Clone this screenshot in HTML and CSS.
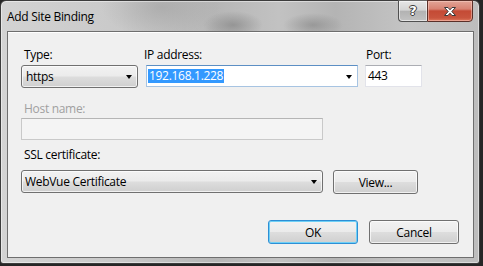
FILE: index.html
```html
<!DOCTYPE html>
<html>
<head>
<meta charset="utf-8">
<link rel="stylesheet" href="styles.css">
</head>
<body>
<div class="window">
  <div class="titlebar">
    <div class="title">Add Site Binding</div>
    <div class="caption">
      <div class="cbtn help"><span>?</span></div>
      <div class="cbtn close">
        <svg width="14" height="11" viewBox="0 0 14 11"><path d="M1.5 1.5 H5 L7 3.8 L9 1.5 H12.5 L8.8 5.5 L12.5 9.5 H9 L7 7.2 L5 9.5 H1.5 L5.2 5.5 Z" fill="#fff" stroke="#3a3a3a" stroke-width="1" stroke-linejoin="round"/></svg>
      </div>
    </div>
  </div>
  <div class="client">
    <div class="row row-top">
      <div class="field f-type">
        <div class="lbl l-type">Type:</div>
        <div class="combo w-type"><span class="ctext">https</span><span class="arrow"></span></div>
      </div>
      <div class="field f-ip">
        <div class="lbl l-ip">IP address:</div>
        <div class="editcombo w-ip"><span class="sel">192.168.1.228</span><span class="arrow"></span></div>
      </div>
      <div class="field f-port">
        <div class="lbl l-port">Port:</div>
        <div class="textbox w-port">443</div>
      </div>
    </div>
    <div class="field f-host">
      <div class="lbl l-host disabled">Host name:</div>
      <div class="textbox disabled-box w-host"></div>
    </div>
    <div class="field f-ssl">
      <div class="lbl l-ssl">SSL certificate:</div>
      <div class="row row-ssl">
        <div class="combo w-ssl"><span class="ctext">WebVue Certificate</span><span class="arrow"></span></div>
        <div class="button w-view">View...</div>
      </div>
    </div>
    <div class="row row-actions">
      <div class="button default w-act">OK</div>
      <div class="button w-act">Cancel</div>
    </div>
  </div>
</div>
</body>
</html>
```
FILE: styles.css
```css
html, body {
  margin: 0;
  padding: 0;
}
body {
  width: 483px;
  height: 266px;
  overflow: hidden;
  background: #262626;
  font-family: "Open Sans", "Noto Sans", sans-serif;
  font-size: 12px;
  color: #000;
}
.window {
  width: 480px;
  height: 264px;
  box-sizing: border-box;
  border: 1px solid #3c3c3c;
  border-radius: 6px 6px 3px 3px;
  display: flex;
  flex-direction: column;
  background:
    radial-gradient(ellipse 30px 14px at 232px 24px, rgba(120,120,120,0.55), rgba(120,120,120,0) 100%),
    radial-gradient(ellipse 30px 12px at 312px 24px, rgba(120,120,120,0.5), rgba(120,120,120,0) 100%),
    radial-gradient(ellipse 60px 30px at 160px 6px, rgba(150,150,150,0.45), rgba(150,150,150,0) 100%),
    linear-gradient(to right, #d3d3d3 0%, #c9c9c9 25%, #b6b6b6 45%, #c2c2c2 58%, #b4b4b4 70%, #c4c4c4 85%, #bdbdbd 100%);
  box-shadow: inset 0 0 0 1px rgba(255,255,255,0.45);
}
.titlebar {
  height: 30px;
  display: flex;
  justify-content: space-between;
  align-items: flex-start;
  padding-left: 6px;
  padding-right: 6px;
  flex: none;
}
.title {
  margin-top: 8px;
  line-height: 16px;
  font-size: 12px;
  color: #000;
  letter-spacing: -0.3px;
}
.caption {
  display: flex;
  margin-top: -1px;
}
.cbtn {
  height: 22px;
  box-sizing: border-box;
  border: 1px solid #505050;
  border-top-color: #6a6a6a;
  display: flex;
  align-items: center;
  justify-content: center;
}
.help {
  width: 29px;
  border-right: none;
  border-radius: 0 0 0 4px;
  background: linear-gradient(#e6e6e6 0%, #d4d4d4 45%, #b3b3b3 52%, #c2c2c2 100%);
  box-shadow: inset 0 0 0 1px rgba(255,255,255,0.55);
}
.help span {
  font-family: "DejaVu Sans", sans-serif;
  font-weight: bold;
  font-size: 13px;
  line-height: 14px;
  color: #fff;
  text-shadow: -1px 0 #3a3a3a, 1px 0 #3a3a3a, 0 -1px #3a3a3a, 0 1px #3a3a3a;
  margin-top: -1px;
}
.close {
  width: 46px;
  border-radius: 0 0 4px 0;
  border-color: #5a2f28;
  background: linear-gradient(#e2a496 0%, #d88272 40%, #c44a35 50%, #c9553e 85%, #e07a5f 100%);
  box-shadow: inset 0 0 0 1px rgba(255,220,210,0.45);
}
.close svg {
  display: block;
}
.client {
  flex: 1;
  margin: 0 5px 5px 6px;
  border: 1px solid #6e6e6e;
  background: #f0f0f0;
  box-shadow: inset 0 1px 0 #ffffff;
  padding: 15px 0 0 13px;
  display: flex;
  flex-direction: column;
  align-items: flex-start;
}
.row {
  display: flex;
  align-items: flex-start;
}
.field {
  display: flex;
  flex-direction: column;
  align-items: flex-start;
}
.lbl {
  line-height: 15px;
  height: 15px;
  white-space: nowrap;
  letter-spacing: -0.3px;
}
.disabled {
  color: #a0a0a0;
}
.l-type { margin-left: 3px; margin-bottom: 3px; }
.l-ip { margin-left: -2px; margin-bottom: 3px; }
.l-port { margin-left: 1px; margin-bottom: 3px; }
.f-type { margin-right: 8px; }
.f-ip { margin-right: 7px; }
.f-host { margin-top: 13px; }
.l-host { margin-left: 3px; margin-bottom: 2px; }
.f-ssl { margin-top: 7px; }
.l-ssl { margin-left: 3px; margin-bottom: 8px; }

.combo, .button {
  box-sizing: border-box;
  border: 1px solid #707070;
  border-radius: 3px;
  background: linear-gradient(#f2f2f2 0%, #ebebeb 48%, #dddddd 52%, #cfcfcf 100%);
  box-shadow: inset 0 0 0 1px rgba(255,255,255,0.7);
  letter-spacing: -0.3px;
}
.combo {
  display: flex;
  align-items: center;
  justify-content: space-between;
  padding: 0 5px 0 4px;
}
.ctext {
  white-space: nowrap;
  line-height: 15px;
}
.arrow {
  width: 0;
  height: 0;
  border-left: 3.5px solid transparent;
  border-right: 3.5px solid transparent;
  border-top: 4px solid #000;
  margin-top: 1px;
}
.w-type { width: 117px; height: 23px; }
.w-ssl { width: 302px; height: 23px; padding-left: 3px; }
.editcombo {
  box-sizing: border-box;
  width: 212px;
  height: 22px;
  border: 1px solid #a7c4e2;
  border-top-color: #5c8fc4;
  background: #fff;
  display: flex;
  align-items: center;
  justify-content: space-between;
  padding: 0 5px 0 1px;
  letter-spacing: -0.3px;
}
.sel {
  background: #3399ff;
  color: #fff;
  line-height: 14px;
  padding: 0 1px;
  white-space: nowrap;
}
.textbox {
  box-sizing: border-box;
  height: 22px;
  background: #fff;
  border: 1px solid #e2e3ea;
  border-top-color: #abadb3;
  padding: 0 2px;
  line-height: 20px;
  letter-spacing: -0.3px;
}
.w-port { width: 57px; }
.w-host { width: 302px; }
.disabled-box {
  background: #f4f4f4;
  border-color: #c9c9c9;
  border-top-color: #b5b5b5;
}
.row-ssl {
  align-items: flex-start;
}
.button {
  display: flex;
  align-items: center;
  justify-content: center;
  height: 24px;
  line-height: 15px;
}
.w-view { width: 85px; margin-left: 10px; }
.row-actions {
  align-self: flex-end;
  margin-top: 26px;
  margin-right: 14px;
  gap: 11px;
}
.w-act { width: 90px; }
.default {
  border-color: #2d8fd5;
  box-shadow: inset 0 0 0 1px #6fd0f6;
}
```
